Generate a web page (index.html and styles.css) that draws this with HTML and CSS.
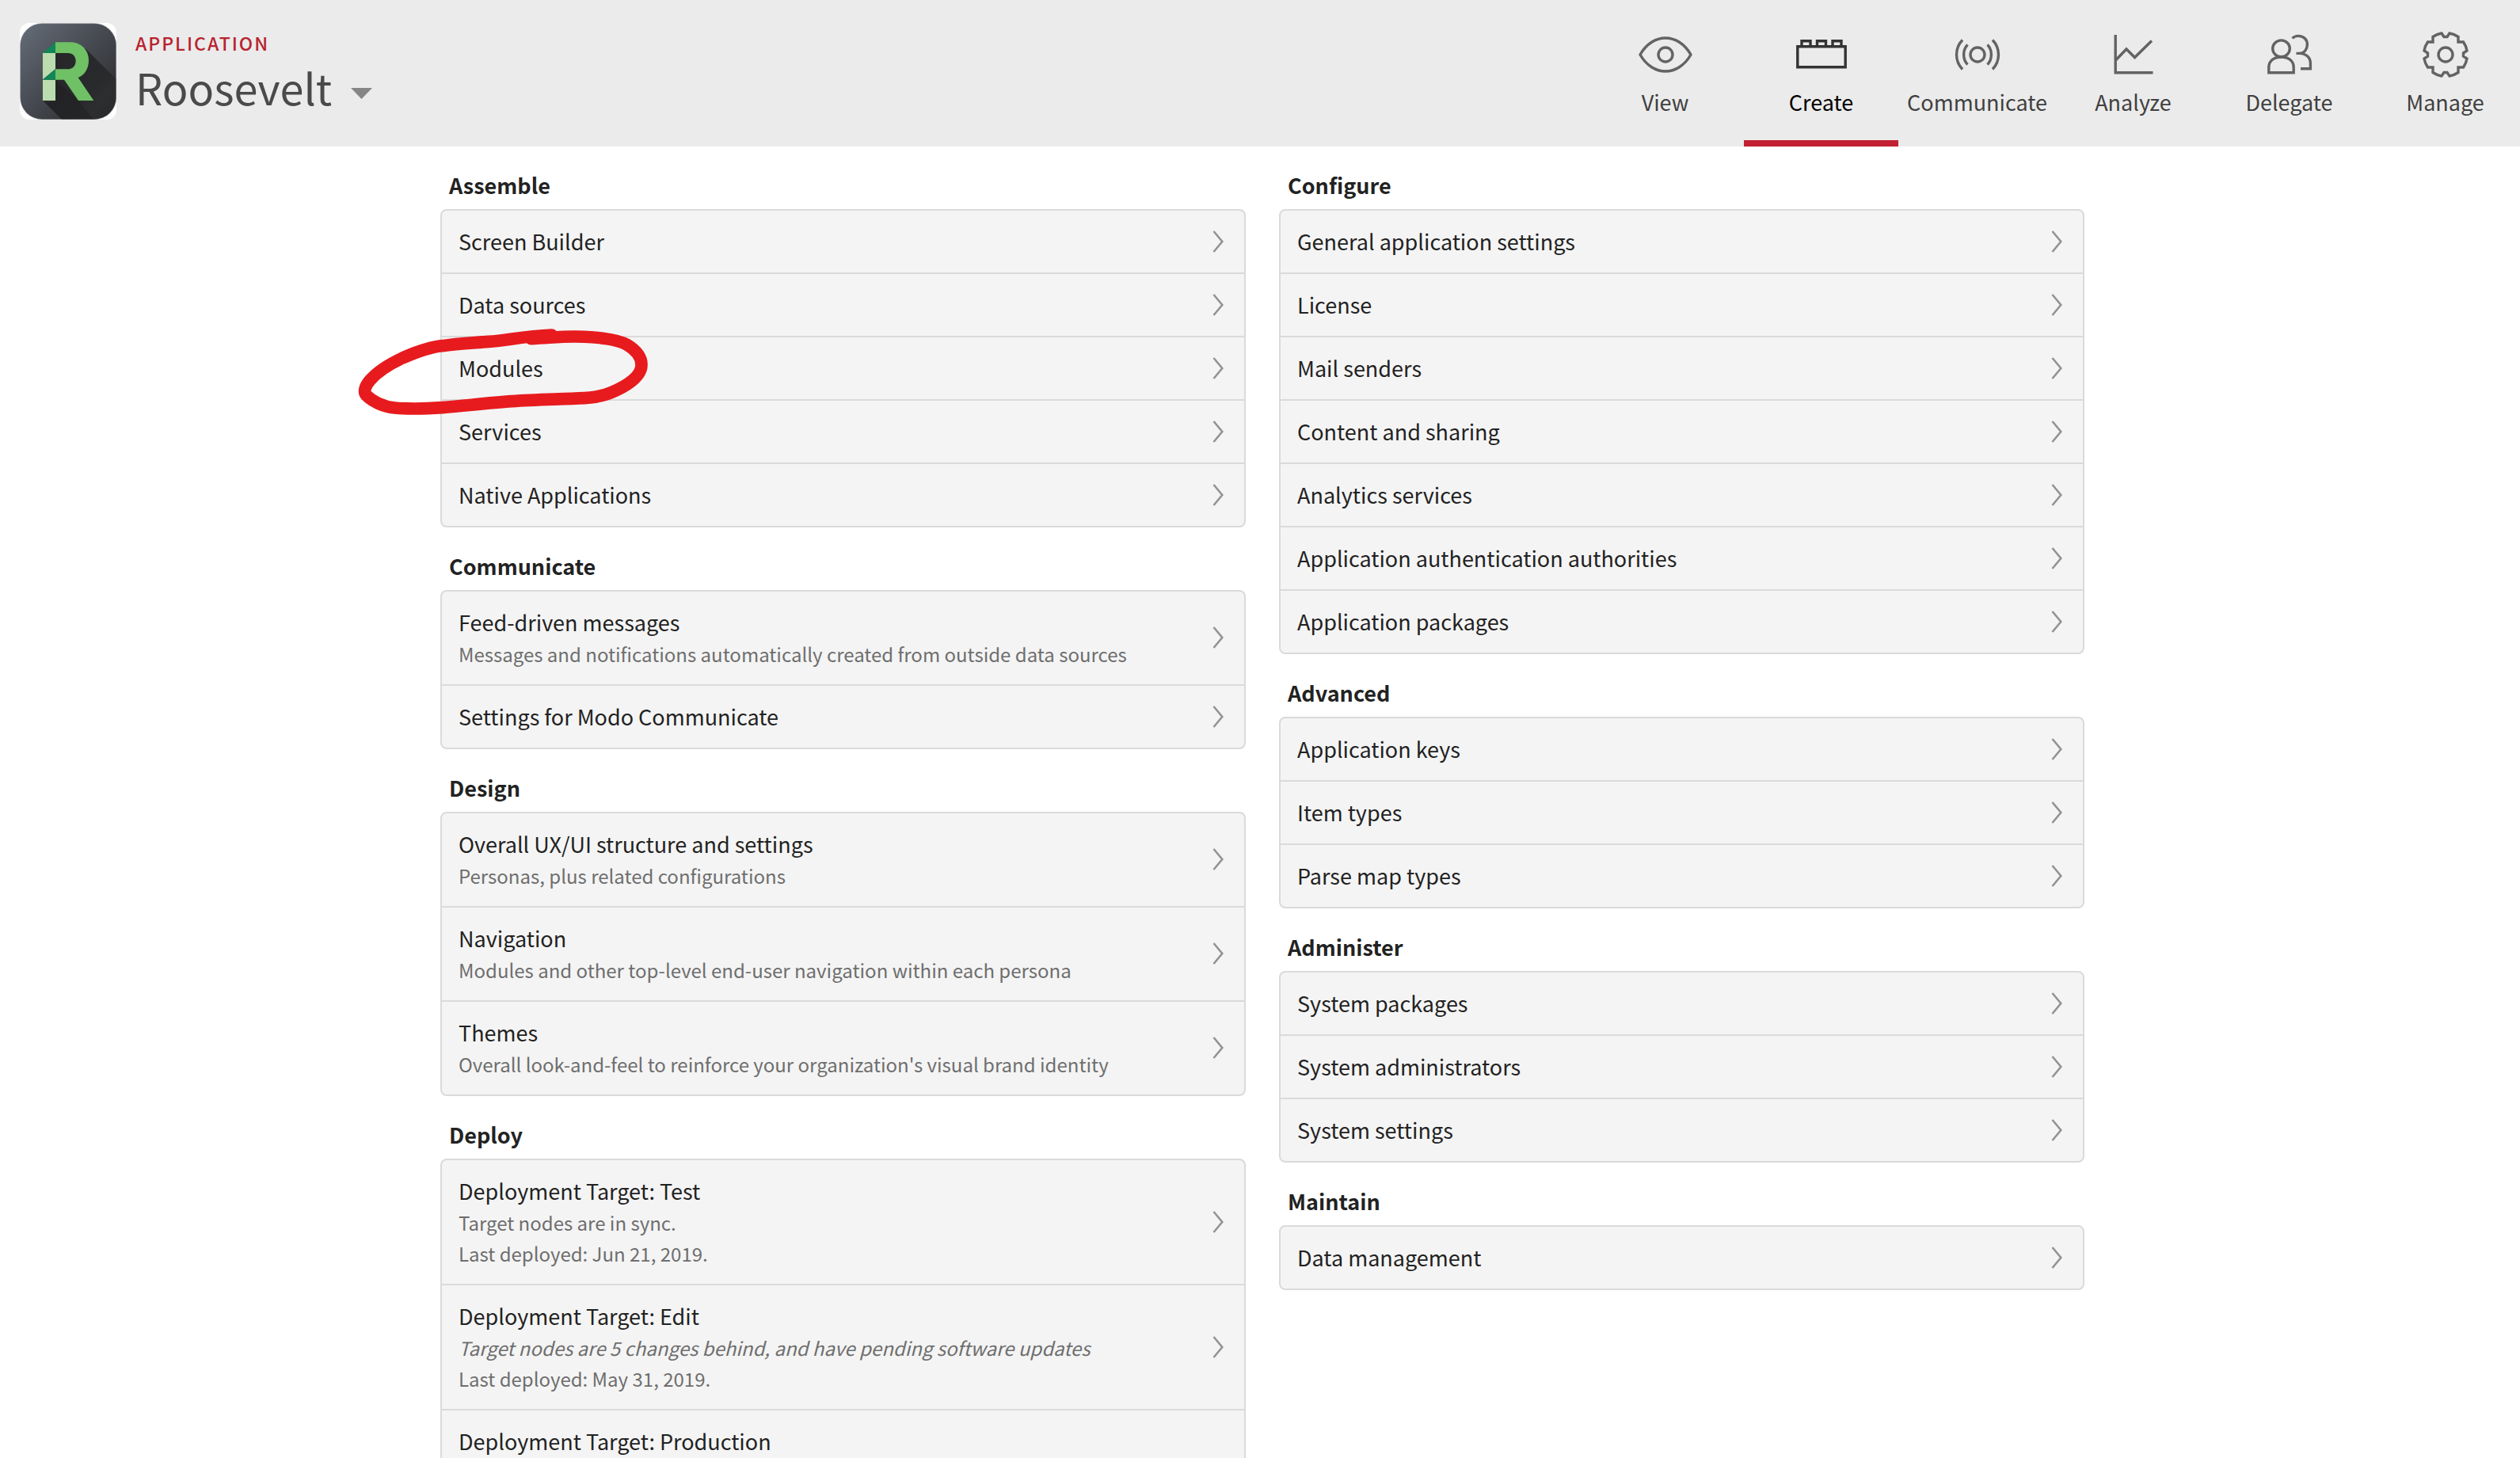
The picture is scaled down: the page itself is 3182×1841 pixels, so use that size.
FILE: index.html
```html
<!DOCTYPE html>
<html lang="en">
<head>
<meta charset="utf-8">
<meta name="viewport" content="width=device-width, initial-scale=1">
<title>Roosevelt - Create</title>
<link rel="stylesheet" href="styles.css">
</head>
<body>

<svg class="defs" aria-hidden="true">
  <symbol id="chevron" viewBox="0 0 14 28">
    <path d="M1.5 1 L12.3 14 L1.5 27" fill="none" stroke="currentColor" stroke-width="2.6"/>
  </symbol>
</svg>

<header class="topbar">
  <div class="brand">
    <svg class="logo" viewBox="0 0 366 366" role="img" aria-label="Roosevelt logo">
      <defs>
        <linearGradient id="tile" x1="0" y1="0" x2="1" y2="1">
          <stop offset="0" stop-color="#666e79"/>
          <stop offset=".5" stop-color="#45484f"/>
          <stop offset="1" stop-color="#262626"/>
        </linearGradient>
        <linearGradient id="shade" gradientUnits="userSpaceOnUse" x1="150" y1="150" x2="310" y2="310">
          <stop offset="0" stop-color="#27272a"/>
          <stop offset=".7" stop-color="#27282a" stop-opacity=".9"/>
          <stop offset="1" stop-color="#2a2a2b" stop-opacity=".5"/>
        </linearGradient>
        <clipPath id="tileclip"><rect x="2" y="2" width="363" height="363" rx="82"/></clipPath>
      </defs>
      <rect width="366" height="366" rx="36" fill="#fff"/>
      <g clip-path="url(#tileclip)">
        <rect width="366" height="366" fill="url(#tile)"/>
        <path d="M250 98 L366 214 V366 H160 L87 294 L135 113 Z" fill="url(#shade)"/>
        <path d="M135 216 L222 294 L280 366 H160 L100 306 L135 294 Z" fill="#1c1c1e" opacity=".45"/>
      </g>
      <rect x="2" y="2" width="363" height="363" rx="82" fill="none" stroke="#7d8389" stroke-opacity=".5" stroke-width="3"/>
      <path d="M87 113 H135 V175 L87 214 Z M87 215 H135 V294 H87 Z" fill="#bbdcae"/>
      <path d="M87 114 L135 73 V114 Z M87 215 L135 175 V215 Z" fill="#118657"/>
      <path d="M135 73 H192 C232 73 261 103 261 141 C261 171 247 197 221 207 L280 294 H222 L168 215 H135 V175 H182 C200 175 212 162 212 144 C212 126 200 114 182 114 H135 Z" fill="#70c066"/>
    </svg>
    <div class="app">
      <span class="app-kind">Application</span>
      <button class="app-switch" type="button">Roosevelt
        <svg class="caret" viewBox="0 0 27 14" aria-hidden="true"><path d="M0 0 H27 L13.5 14 Z" fill="#858585"/></svg>
      </button>
    </div>
  </div>

  <nav class="tabs" aria-label="Main">
    <a class="tab" href="#view">
      <svg class="icon" viewBox="-36 -36 72 72" aria-hidden="true"><path d="M-32 0 C-16 -28 16 -28 32 0 C16 28 -16 28 -32 0 Z"/><circle r="9"/></svg>
      View
    </a>
    <a class="tab tab-current" href="#create" aria-current="page">
      <svg class="icon" viewBox="-36 -36 72 72" aria-hidden="true"><path d="M-30.2 -10.2 H30.2 V15.8 H-30.2 Z M-25 -10 V-17.2 H-14 V-10 M-5.5 -10 V-17.2 H5.5 V-10 M14 -10 V-17.2 H25 V-10"/></svg>
      Create
    </a>
    <a class="tab" href="#communicate">
      <svg class="icon" viewBox="-36 -36 72 72" aria-hidden="true"><circle r="9"/><path d="M-12.5 -12.5 C-19 -6 -19 6 -12.5 12.5 M12.5 -12.5 C19 -6 19 6 12.5 12.5 M-19 -18.5 C-29 -8 -29 8 -19 18.5 M19 -18.5 C29 -8 29 8 19 18.5"/></svg>
      Communicate
    </a>
    <a class="tab" href="#analyze">
      <svg class="icon" viewBox="-36 -36 72 72" aria-hidden="true"><path d="M-22.8 -25 V22.7 H24.5 M-22 6.5 L-9 -7 L1.5 3.5 L23 -17.5"/></svg>
      Analyze
    </a>
    <a class="tab" href="#delegate">
      <svg class="icon" viewBox="-36 -36 72 72" aria-hidden="true"><ellipse cx="-10.5" cy="-7.7" rx="10.8" ry="10.4"/><path d="M-26.2 22.8 V16 C-26.2 8 -20 3 -10.5 3 C-1 3 5.2 8 5.2 16 V22.8 Z M3.6 -20.6 C5.5 -22.6 8 -23.6 11 -23.6 C18 -23.6 22.4 -19 22.4 -13 C22.4 -7 18.5 -1.6 13 -1.6 H8.5 M13 -1.6 C21 -1.2 26.4 3.5 26.4 11 V17.8 H14"/></svg>
      Delegate
    </a>
    <a class="tab" href="#manage">
      <svg class="icon" viewBox="-36 -36 72 72" aria-hidden="true"><circle r="9"/><path d="M-5 -27 L-2 -22.5 H2 L5 -27 Q11 -26 16 -22.5 V-16 H22.5 Q26 -11 27 -5 L22.5 -2 V2 L27 5 Q26 11 22.5 16 H16 V22.5 Q11 26 5 27 L2 22.5 H-2 L-5 27 Q-11 26 -16 22.5 V16 H-22.5 Q-26 11 -27 5 L-22.5 2 V-2 L-27 -5 Q-26 -11 -22.5 -16 H-16 V-22.5 Q-11 -26 -5 -27 Z"/></svg>
      Manage
    </a>
  </nav>
</header>

<main class="console">
  <div class="column">
    <section>
      <h2>Assemble</h2>
      <ul class="card">
        <li><a href="#screen-builder"><span class="title">Screen Builder</span><svg class="chevron"><use href="#chevron"/></svg></a></li>
        <li><a href="#data-sources"><span class="title">Data sources</span><svg class="chevron"><use href="#chevron"/></svg></a></li>
        <li class="marked"><a href="#modules"><span class="title">Modules</span><svg class="chevron"><use href="#chevron"/></svg></a>
          <svg class="marker" viewBox="60 640 1110 336" aria-hidden="true"><path d="M722 681 C790 678 840 672 890 673 C950 674 1040 678 1085 704 C1122 726 1140 752 1140 780 C1140 812 1112 840 1065 866 C1020 890 985 902 925 906 C830 911 740 911 650 918 C560 924 480 934 385 942 C330 946 260 948 205 943 C160 938 120 918 98 896 C85 882 94 858 112 838 C140 806 175 782 235 754 C290 730 345 712 385 708 C440 700 500 697 560 692 C640 686 690 672 800 667"/></svg>
        </li>
        <li><a href="#services"><span class="title">Services</span><svg class="chevron"><use href="#chevron"/></svg></a></li>
        <li><a href="#native-applications"><span class="title">Native Applications</span><svg class="chevron"><use href="#chevron"/></svg></a></li>
      </ul>
    </section>
    <section>
      <h2>Communicate</h2>
      <ul class="card">
        <li><a href="#feed-messages"><span class="title">Feed-driven messages</span><span class="note">Messages and notifications automatically created from outside data sources</span><svg class="chevron"><use href="#chevron"/></svg></a></li>
        <li><a href="#communicate-settings"><span class="title">Settings for Modo Communicate</span><svg class="chevron"><use href="#chevron"/></svg></a></li>
      </ul>
    </section>
    <section>
      <h2>Design</h2>
      <ul class="card">
        <li><a href="#structure"><span class="title">Overall UX/UI structure and settings</span><span class="note">Personas, plus related configurations</span><svg class="chevron"><use href="#chevron"/></svg></a></li>
        <li><a href="#navigation"><span class="title">Navigation</span><span class="note">Modules and other top-level end-user navigation within each persona</span><svg class="chevron"><use href="#chevron"/></svg></a></li>
        <li><a href="#themes"><span class="title">Themes</span><span class="note">Overall look-and-feel to reinforce your organization's visual brand identity</span><svg class="chevron"><use href="#chevron"/></svg></a></li>
      </ul>
    </section>
    <section>
      <h2>Deploy</h2>
      <ul class="card">
        <li><a href="#deploy-test"><span class="title">Deployment Target: Test</span><span class="note">Target nodes are in sync.</span><span class="note">Last deployed: Jun 21, 2019.</span><svg class="chevron"><use href="#chevron"/></svg></a></li>
        <li><a href="#deploy-edit"><span class="title">Deployment Target: Edit</span><em class="note">Target nodes are 5 changes behind, and have pending software updates</em><span class="note">Last deployed: May 31, 2019.</span><svg class="chevron"><use href="#chevron"/></svg></a></li>
        <li><a href="#deploy-production"><span class="title">Deployment Target: Production</span></a></li>
      </ul>
    </section>
  </div>

  <div class="column">
    <section>
      <h2>Configure</h2>
      <ul class="card">
        <li><a href="#general"><span class="title">General application settings</span><svg class="chevron"><use href="#chevron"/></svg></a></li>
        <li><a href="#license"><span class="title">License</span><svg class="chevron"><use href="#chevron"/></svg></a></li>
        <li><a href="#mail"><span class="title">Mail senders</span><svg class="chevron"><use href="#chevron"/></svg></a></li>
        <li><a href="#sharing"><span class="title">Content and sharing</span><svg class="chevron"><use href="#chevron"/></svg></a></li>
        <li><a href="#analytics"><span class="title">Analytics services</span><svg class="chevron"><use href="#chevron"/></svg></a></li>
        <li><a href="#authorities"><span class="title">Application authentication authorities</span><svg class="chevron"><use href="#chevron"/></svg></a></li>
        <li><a href="#packages"><span class="title">Application packages</span><svg class="chevron"><use href="#chevron"/></svg></a></li>
      </ul>
    </section>
    <section>
      <h2>Advanced</h2>
      <ul class="card">
        <li><a href="#keys"><span class="title">Application keys</span><svg class="chevron"><use href="#chevron"/></svg></a></li>
        <li><a href="#item-types"><span class="title">Item types</span><svg class="chevron"><use href="#chevron"/></svg></a></li>
        <li><a href="#parse-maps"><span class="title">Parse map types</span><svg class="chevron"><use href="#chevron"/></svg></a></li>
      </ul>
    </section>
    <section>
      <h2>Administer</h2>
      <ul class="card">
        <li><a href="#system-packages"><span class="title">System packages</span><svg class="chevron"><use href="#chevron"/></svg></a></li>
        <li><a href="#administrators"><span class="title">System administrators</span><svg class="chevron"><use href="#chevron"/></svg></a></li>
        <li><a href="#system-settings"><span class="title">System settings</span><svg class="chevron"><use href="#chevron"/></svg></a></li>
      </ul>
    </section>
    <section>
      <h2>Maintain</h2>
      <ul class="card">
        <li><a href="#data-management"><span class="title">Data management</span><svg class="chevron"><use href="#chevron"/></svg></a></li>
      </ul>
    </section>
  </div>
</main>
</body>
</html>
```
FILE: styles.css
```css
* { box-sizing: border-box; }

html { overflow-x: hidden; }

body {
  margin: 0;
  background: #fff;
  color: #222;
  font: 27px/41px "Noto Sans CJK SC", "Noto Sans", sans-serif;
}

.defs { display: none; }

a { color: inherit; text-decoration: none; }

/* Top bar */
.topbar {
  display: flex;
  justify-content: space-between;
  height: 185px;
  background: #ebebeb;
}

.brand {
  display: flex;
  gap: 24px;
  padding: 29px 0 0 25px;
}

.logo { width: 122px; height: 122px; }

.app { display: flex; flex-direction: column; align-items: flex-start; }

.app-kind {
  margin-top: 7px;
  color: #b7242f;
  font-size: 23px;
  font-weight: 500;
  line-height: 36px;
  letter-spacing: 2px;
  text-transform: uppercase;
}

.app-switch {
  display: flex;
  align-items: center;
  gap: 24px;
  padding: 0;
  border: 0;
  background: none;
  color: #4a4a4a;
  font: inherit;
  font-size: 54px;
  line-height: 76px;
}

.caret { width: 27px; height: 14px; margin-top: 16px; }

/* The last tab runs to the window's edge */
.tabs { display: flex; gap: 2px; margin-right: -3px; }

.tab {
  display: flex;
  flex-direction: column;
  align-items: center;
  gap: 3px;
  width: 195px;
  padding-top: 33px;
  border-bottom: 8px solid transparent;
  color: #404040;
}

.tab-current { border-color: #c22032; color: #000; }

.icon {
  width: 72px;
  height: 72px;
  fill: none;
  stroke: #636363;
  stroke-width: 3.4;
}

.tab-current .icon { stroke: #333; }

/* Two columns of cards */
.console {
  display: grid;
  grid-template-columns: 1fr 1fr;
  gap: 42px;
  align-items: start;
  max-width: 2082px;
  margin: 0 auto;
  padding-left: 6px;
}

h2 {
  margin: 0;
  padding: 28px 11px 10px;
  font-size: 27px;
  font-weight: 700;
  line-height: 41px;
}

.card {
  margin: 0;
  padding: 0;
  list-style: none;
  background: #f4f4f4;
  border: 2px solid #dadada;
  border-radius: 8px;
}

.card li + li { border-top: 2px solid #dadada; }

.card a {
  display: grid;
  grid-template-columns: 1fr 14px;
  column-gap: 20px;
  padding: 18px 26px 19px 21px;
}

.title, .note { grid-column: 1; }

.note {
  color: #6e6e6e;
  font-size: 24px;
  line-height: 39px;
}

.chevron {
  grid-column: 2;
  grid-row: 1 / span 3;
  align-self: center;
  width: 14px;
  height: 28px;
  color: #929296;
}

/* Hand-drawn ring round one row */
.marked { position: relative; }

.marker {
  position: absolute;
  left: -108px;
  top: -12px;
  width: 370px;
  height: 112px;
  fill: none;
  stroke: #e71b1e;
  stroke-width: 47;
  stroke-linecap: round;
  pointer-events: none;
}
```
